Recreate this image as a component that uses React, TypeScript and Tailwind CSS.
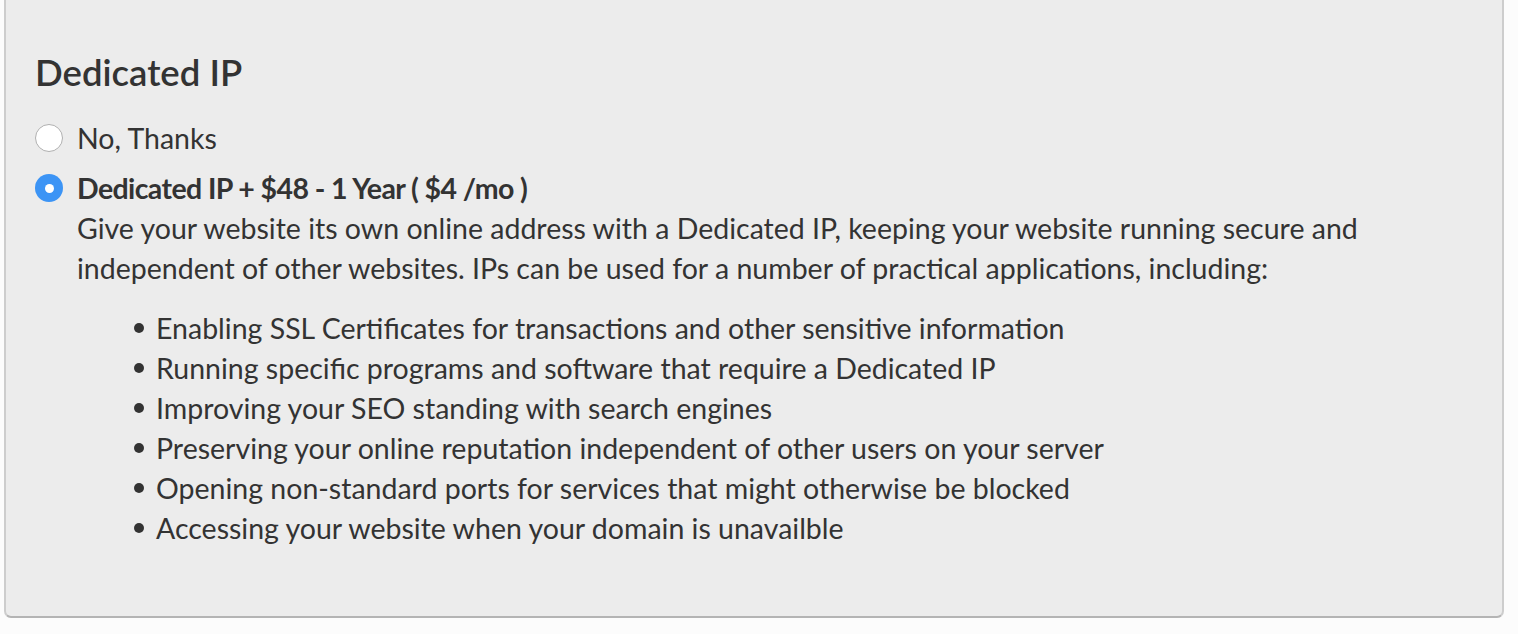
import React from "react";

const bullets = [
  "Enabling SSL Certificates for transactions and other sensitive information",
  "Running specific programs and software that require a Dedicated IP",
  "Improving your SEO standing with search engines",
  "Preserving your online reputation independent of other users on your server",
  "Opening non-standard ports for services that might otherwise be blocked",
  "Accessing your website when your domain is unavailble",
];

const Radio = ({ checked }: { checked?: boolean }) =>
  checked ? (
    <span className="flex h-[28px] w-[28px] shrink-0 items-center justify-center rounded-full bg-[#3c94f5]">
      <span className="h-[9px] w-[9px] rounded-full bg-white" />
    </span>
  ) : (
    <span className="h-[28px] w-[28px] shrink-0 rounded-full border border-[#b0b0b0] bg-white" />
  );

export default function App() {
  return (
    <div className="min-h-[634px] bg-[#fcfcfc] pl-[4px] pr-[14px] text-[#333]" style={{ fontFamily: "Lato, 'Open Sans', sans-serif" }}>
      <div className="h-[618px] w-[1500px] rounded-b-[7px] border-x-2 border-b-2 border-x-[#cdcdcd] border-b-[#b4b4b4] bg-[#ececec] pl-[29px] pt-[48px]">
        <h2 className="text-[36.5px] font-semibold leading-[48px]">Dedicated IP</h2>
        <div className="mt-[22px] flex flex-col">
          <label className="flex h-[40px] items-center gap-[14px] text-[28.5px]">
            <Radio />
            <span>No, Thanks</span>
          </label>
          <label className="mt-[10px] flex h-[40px] items-center gap-[14px] text-[28.5px] font-bold tracking-[-0.6px]">
            <Radio checked />
            <span>Dedicated IP + $48 - 1 Year ( $4 /mo )</span>
          </label>
          <div className="pl-[42px] text-[28.5px] leading-[40px]">
            <p>
              Give your website its own online address with a Dedicated IP, keeping your website running secure and
              <br />
              independent of other websites. IPs can be used for a number of practical applications, including:
            </p>
            <ul className="mt-[20px] flex flex-col pl-[57px]">
              {bullets.map((b, i) => (
                <li key={i} className="flex h-[40px] items-center gap-[12px]">
                  <span className="h-[10px] w-[10px] shrink-0 rounded-full bg-[#333]" />
                  <span>{b}</span>
                </li>
              ))}
            </ul>
          </div>
        </div>
      </div>
    </div>
  );
}
